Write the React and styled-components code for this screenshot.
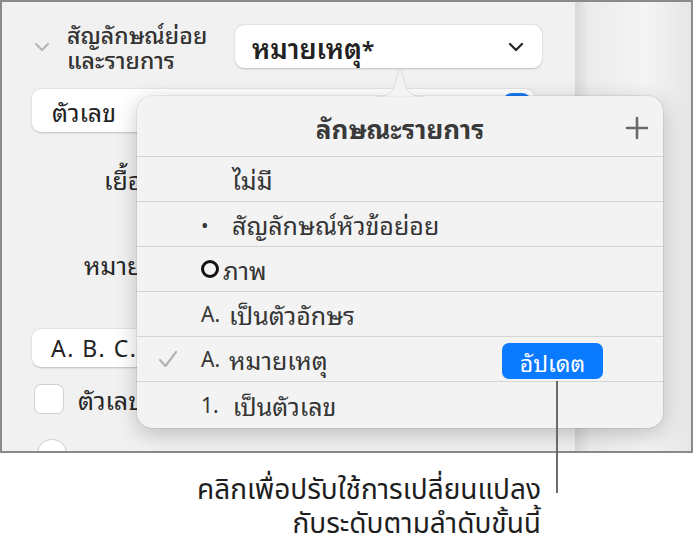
import React from "react";
import styled, { createGlobalStyle } from "styled-components";

const Global = createGlobalStyle`
  html, body { margin: 0; padding: 0; background: #ffffff; }
  body { font-family: "Noto Sans Thai Looped", "Noto Sans Thai", "Noto Sans", "Liberation Sans", sans-serif; }
  * { box-sizing: border-box; }
`;

const Page = styled.div`
  position: relative;
  width: 694px;
  height: 547px;
  background: #fff;
  overflow: hidden;
`;

const Frame = styled.div`
  width: 693px;
  height: 453px;
  border: 2px solid #8a8a8a;
  display: flex;
  overflow: hidden;
`;

const Sidebar = styled.div`
  width: 573px;
  height: 100%;
  background: #f1f1f1;
  display: flex;
  flex-direction: column;
  padding: 23px 0 0 30px;
  color: #262626;
`;

const Canvas = styled.div`
  flex: 1;
  height: 100%;
  background: linear-gradient(90deg, #d8d8d8 0%, #ececec 12%, #f4f4f4 60%, #e6e6e6 100%);
`;

const SectionHeader = styled.div`
  display: flex;
  align-items: center;
  height: 43px;
`;

const Chevron = styled.svg`
  width: 16px;
  height: 10px;
  margin: 0 17px 0 2px;
  flex: none;
`;

const SectionTitle = styled.div`
  width: 168px;
  font-size: 23px;
  line-height: 25px;
  font-weight: 500;
  color: #333;
  margin-top: -2px;
  white-space: nowrap;
`;

const Select = styled.div`
  width: ${(p) => p.$w}px;
  height: ${(p) => p.$h || 43}px;
  background: #fff;
  border-radius: 9px;
  box-shadow: 0 0.5px 2px rgba(0, 0, 0, 0.22);
  display: flex;
  align-items: center;
  justify-content: space-between;
  padding: 0 18px 0 ${(p) => p.$pl || 17}px;
  font-size: ${(p) => p.$size || 25}px;
  font-weight: ${(p) => p.$weight || 400};
  color: #222;
  position: relative;
  flex: none;
  white-space: nowrap;
`;

const Latin = styled.span`
  font-family: "Noto Sans", "Liberation Sans", sans-serif;
  font-size: ${(p) => p.$size || 21}px;
  letter-spacing: ${(p) => p.$ls || 0}px;
  margin-right: ${(p) => p.$mr || 0}px;
  white-space: pre;
`;

const Row = styled.div`
  display: flex;
  align-items: center;
  margin-top: ${(p) => p.$mt}px;
  padding-left: ${(p) => p.$pl || 0}px;
  height: ${(p) => p.$h || 43}px;
`;

const Label = styled.div`
  font-size: 25px;
  color: #262626;
  white-space: nowrap;
`;

const BlueNub = styled.div`
  position: absolute;
  right: 3px;
  top: 4px;
  width: 30px;
  height: 20px;
  background: #1a7bf2;
  border-radius: 10px;
`;

const Check = styled.div`
  width: 28px;
  height: 28px;
  border-radius: 6px;
  background: #fff;
  box-shadow: 0 0 0 1px #d2d2d2;
  margin: 0 15px 0 3px;
`;

const Circle = styled.div`
  width: 28px;
  height: 28px;
  border-radius: 50%;
  background: #fff;
  box-shadow: 0 0 0 1px #d2d2d2;
  margin-left: 6px;
`;

const Arrow = styled.svg`
  position: absolute;
  left: 376px;
  top: 68px;
  width: 48px;
  height: 30px;
  z-index: 3;
  overflow: visible;
`;

const Popover = styled.div`
  position: absolute;
  left: 137px;
  top: 96px;
  width: 526px;
  height: 332px;
  background: #f3f3f4;
  border-radius: 15px;
  box-shadow: 0 0 0 0.5px rgba(0, 0, 0, 0.12), 0 6px 22px rgba(0, 0, 0, 0.22);
  display: flex;
  flex-direction: column;
  z-index: 2;
  color: #353535;
`;

const PopHeader = styled.div`
  height: 61px;
  display: flex;
  align-items: center;
  justify-content: center;
  position: relative;
  border-bottom: 1px solid #d5d5d5;
  font-size: 26px;
  font-weight: 700;
  color: #3a3a3a;
  padding-top: 2px;
`;

const Plus = styled.svg`
  position: absolute;
  right: 14px;
  top: 20px;
  width: 24px;
  height: 24px;
`;

const Item = styled.div`
  height: 45px;
  display: flex;
  align-items: center;
  border-bottom: ${(p) => (p.$last ? "none" : "1px solid #d5d5d5")};
  padding-left: 64px;
  position: relative;
  font-size: 25px;
  white-space: nowrap;
`;

const Marker = styled.span`
  display: inline-block;
  width: ${(p) => p.$w}px;
  flex: none;
  font-size: 20px;
`;

const Ring = styled.span`
  width: 18px;
  height: 18px;
  border: 3px solid #111;
  border-radius: 50%;
  margin-right: 4px;
  flex: none;
`;

const Tick = styled.svg`
  position: absolute;
  left: 21px;
  top: 13px;
  width: 20px;
  height: 18px;
`;

const UpdateBtn = styled.div`
  position: absolute;
  left: 365px;
  top: 6px;
  width: 101px;
  height: 36px;
  border-radius: 7px;
  background: #0a7aff;
  color: #fff;
  font-size: 23px;
  display: flex;
  align-items: center;
  justify-content: center;
`;

const Leader = styled.div`
  position: absolute;
  left: 556px;
  top: 381px;
  width: 1.5px;
  height: 112px;
  background: #6b6b6b;
  z-index: 4;
`;

const Callout = styled.div`
  position: absolute;
  right: 153px;
  top: 474px;
  text-align: right;
  font-family: "Noto Sans Thai", "Noto Sans", sans-serif;
  font-size: 28px;
  line-height: 34px;
  color: #1e1e1e;
  white-space: nowrap;
`;

export default function App() {
  return (
    <Page>
      <Global />
      <Frame>
        <Sidebar>
          <SectionHeader>
            <Chevron viewBox="0 0 16 10">
              <path d="M2 2 L8 8 L14 2" fill="none" stroke="#b5b5b5" strokeWidth="2" strokeLinecap="round" strokeLinejoin="round" />
            </Chevron>
            <SectionTitle>
              สัญลักษณ์ย่อย
              <br />
              และรายการ
            </SectionTitle>
            <Select $w={307} $weight={600} $size={27}>
              <span>
                หมายเหตุ<Latin $size={23}>*</Latin>
              </span>
              <svg width="16" height="10" viewBox="0 0 16 10">
                <path d="M2 2 L8 8 L14 2" fill="none" stroke="#222" strokeWidth="2.2" strokeLinecap="round" strokeLinejoin="round" />
              </svg>
            </Select>
          </SectionHeader>
          <Row $mt={21}>
            <Select $w={503} $pl={20}>
              ตัวเลข
              <BlueNub />
            </Select>
          </Row>
          <Row $mt={27} $pl={72}>
            <Label>เยื้อ</Label>
          </Row>
          <Row $mt={45} $pl={52}>
            <Label>หมาย</Label>
          </Row>
          <Row $mt={45} $h={38}>
            <Select $w={503} $h={38} $pl={19}>
              <Latin $size={23} $ls={1.5}>A. B. C.</Latin>
            </Select>
          </Row>
          <Row $mt={18} $h={28}>
            <Check />
            <Label>ตัวเลข</Label>
          </Row>
          <Row $mt={27} $h={28}>
            <Circle />
          </Row>
        </Sidebar>
        <Canvas />
      </Frame>

      <Arrow viewBox="0 0 48 30">
        <path d="M0 29 C10 29 14 26 18 20 L22 4 C23 1.5 25 1.5 26 4 L30 20 C34 26 38 29 48 29 Z" fill="#f3f3f4" stroke="rgba(0,0,0,0.12)" strokeWidth="0.8" />
        <rect x="0" y="28.6" width="48" height="2" fill="#f3f3f4" />
      </Arrow>

      <Popover>
        <PopHeader>
          ลักษณะรายการ
          <Plus viewBox="0 0 24 24">
            <path d="M12 2 V22 M2 12 H22" stroke="#6a6a6a" strokeWidth="2.6" strokeLinecap="round" />
          </Plus>
        </PopHeader>
        <Item>
          <Marker $w={31} />
          ไม่มี
        </Item>
        <Item>
          <Marker $w={31}>•</Marker>
          สัญลักษณ์หัวข้อย่อย
        </Item>
        <Item>
          <Ring />
          ภาพ
        </Item>
        <Item>
          <Latin $mr={9}>A.</Latin>เป็นตัวอักษร
        </Item>
        <Item>
          <Tick viewBox="0 0 20 18">
            <path d="M2 10 L7.5 16 L18 2" fill="none" stroke="#b3b3b3" strokeWidth="2.2" strokeLinecap="round" strokeLinejoin="round" />
          </Tick>
          <Latin $mr={9}>A.</Latin>หมายเหตุ
          <UpdateBtn>อัปเดต</UpdateBtn>
        </Item>
        <Item $last>
          <Latin $mr={14}>1.</Latin>เป็นตัวเลข
        </Item>
      </Popover>

      <Leader />
      <Callout>
        คลิกเพื่อปรับใช้การเปลี่ยนแปลง
        <br />
        กับระดับตามลำดับขั้นนี้
      </Callout>
    </Page>
  );
}
